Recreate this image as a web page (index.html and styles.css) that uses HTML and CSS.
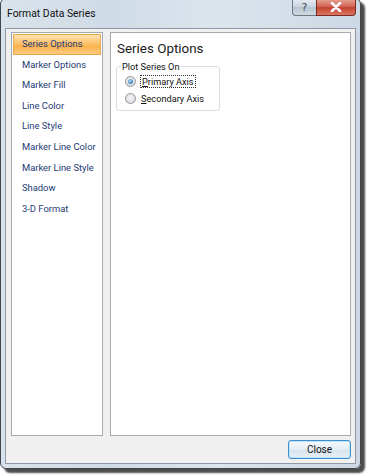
FILE: index.html
```html
<!DOCTYPE html>
<html lang="en">
<head>
    <meta charset="UTF-8">
    <title>Format Data Series</title>
    <link rel="stylesheet" href="styles.css">
</head>
<body>
    <div class="window">
        <div class="titlebar">
            <span class="title">Format Data Series</span>
            <div class="caption-buttons">
                <span class="help-btn">?</span>
                <span class="close-btn">
                    <svg width="12" height="10" viewBox="0 0 12 10">
                        <path d="M2 1 L10 9 M10 1 L2 9" stroke="#fff" stroke-width="2.6" stroke-linecap="round"/>
                    </svg>
                </span>
            </div>
        </div>
        <div class="client">
            <div class="panels">
                <ul class="nav-list">
                    <li class="active">Series Options</li>
                    <li>Marker Options</li>
                    <li>Marker Fill</li>
                    <li>Line Color</li>
                    <li>Line Style</li>
                    <li>Marker Line Color</li>
                    <li>Marker Line Style</li>
                    <li>Shadow</li>
                    <li>3-D Format</li>
                </ul>
                <div class="options">
                    <h2>Series Options</h2>
                    <fieldset class="group">
                        <legend>Plot Series On</legend>
                        <label class="radio-row">
                            <span class="radio checked"></span>
                            <span class="focus"><u>P</u>rimary Axis</span>
                        </label>
                        <label class="radio-row">
                            <span class="radio"></span>
                            <span><u>S</u>econdary Axis</span>
                        </label>
                    </fieldset>
                </div>
            </div>
            <div class="footer">
                <button class="close-button">Close</button>
            </div>
        </div>
    </div>
</body>
</html>
```

FILE: styles.css
```css
body {
    margin: 0;
    background: #ffffff;
    font-family: Roboto, "Noto Sans", sans-serif;
    width: 368px;
    height: 476px;
    overflow: hidden;
}

.window {
    width: 361px;
    height: 471px;
    margin-top: -2px;
    border: 1px solid #3f464e;
    border-radius: 6px;
    background: linear-gradient(90deg, #d9e3ec 0%, #cfdbe6 30%, #dbe5ee 60%, #ccd8e3 100%);
    box-shadow: 4px 4px 2px rgba(0, 0, 0, 0.7);
    display: flex;
    flex-direction: column;
    box-sizing: border-box;
}

.titlebar {
    height: 29px;
    display: flex;
    align-items: flex-start;
    justify-content: space-between;
    padding-left: 6px;
    padding-right: 4px;
}

.title {
    font-size: 10.4px;
    color: #111;
    margin-top: 8px;
}

.caption-buttons {
    display: flex;
}

.help-btn,
.close-btn {
    height: 17px;
    display: flex;
    align-items: center;
    justify-content: center;
    border: 1px solid #6d7884;
    border-top: none;
    box-sizing: border-box;
}

.help-btn {
    width: 24px;
    border-right: none;
    border-radius: 0 0 0 4px;
    background: linear-gradient(#e6ecf2, #c9d3dd 50%, #b8c4d0 51%, #cfd9e3);
    color: #3c4856;
    font-size: 11px;
    font-family: "DejaVu Sans", sans-serif;
}

.close-btn {
    width: 40px;
    border-radius: 0 0 4px 0;
    border-color: #7b2a22;
    background: linear-gradient(#e8a496, #d2675a 45%, #c3432f 55%, #d97864);
}

.client {
    flex: 1;
    margin: 0 4px 4px 4px;
    border: 1px solid #8e9aa6;
    background: #f0f0f0;
    padding: 3px 4px 4px 5px;
    display: flex;
    flex-direction: column;
}

.panels {
    flex: 1;
    display: flex;
    gap: 7px;
}

.nav-list {
    list-style: none;
    margin: 0;
    padding: 1px 1px;
    width: 88px;
    background: #fff;
    border: 1px solid #a3a9b1;
}

.nav-list li {
    height: 20.6px;
    line-height: 20px;
    padding-left: 9px;
    font-size: 9.4px;
    color: #233a74;
    white-space: nowrap;
    box-sizing: border-box;
}

.nav-list li.active {
    border: 1px solid #e9a84c;
    padding-left: 8px;
    line-height: 18px;
    background: linear-gradient(#fde3b0, #fcc474 40%, #fbb24e 60%, #fdcd7e);
}

.options {
    flex: 1;
    background: #fff;
    border: 1px solid #a3a9b1;
    padding: 4px 5px;
}

.options h2 {
    font-size: 13.4px;
    font-weight: normal;
    color: #1a1a1a;
    margin: 3px 0 0 1px;
    line-height: 18px;
}

.group {
    width: 88px;
    margin: 3px 0 0 0;
    padding: 0 6px 4px 8px;
    border: 1px solid #d5dfe5;
    border-radius: 3px;
}

.group legend {
    font-size: 9.2px;
    color: #111;
    padding: 0 1px;
    margin-left: -4px;
}

.radio-row {
    display: flex;
    align-items: center;
    gap: 5px;
    font-size: 9.2px;
    color: #111;
    height: 16px;
    margin-top: 1px;
}

.radio {
    width: 9px;
    height: 9px;
    border-radius: 50%;
    border: 1px solid #8c959e;
    background: radial-gradient(circle at 50% 40%, #f4f4f4, #d6d6d6);
    position: relative;
}

.radio.checked::after {
    content: "";
    position: absolute;
    left: 2px;
    top: 2px;
    width: 5px;
    height: 5px;
    border-radius: 50%;
    background: radial-gradient(circle at 40% 35%, #9fd4f3, #1c5f9c);
}

.focus {
    outline: 1px dotted #333;
    outline-offset: 0;
    padding: 0 1px;
}

.footer {
    display: flex;
    justify-content: flex-end;
    padding-top: 4px;
}

.close-button {
    width: 63px;
    height: 19px;
    font-family: Roboto, sans-serif;
    font-size: 10px;
    color: #111;
    border: 1px solid #3c8fd0;
    border-radius: 3px;
    background: linear-gradient(#f4f8fb, #e5eef5 50%, #d6e3ee 51%, #e6eff6);
    box-shadow: inset 0 0 0 1px #bfe3f8;
    padding: 0;
}
```
